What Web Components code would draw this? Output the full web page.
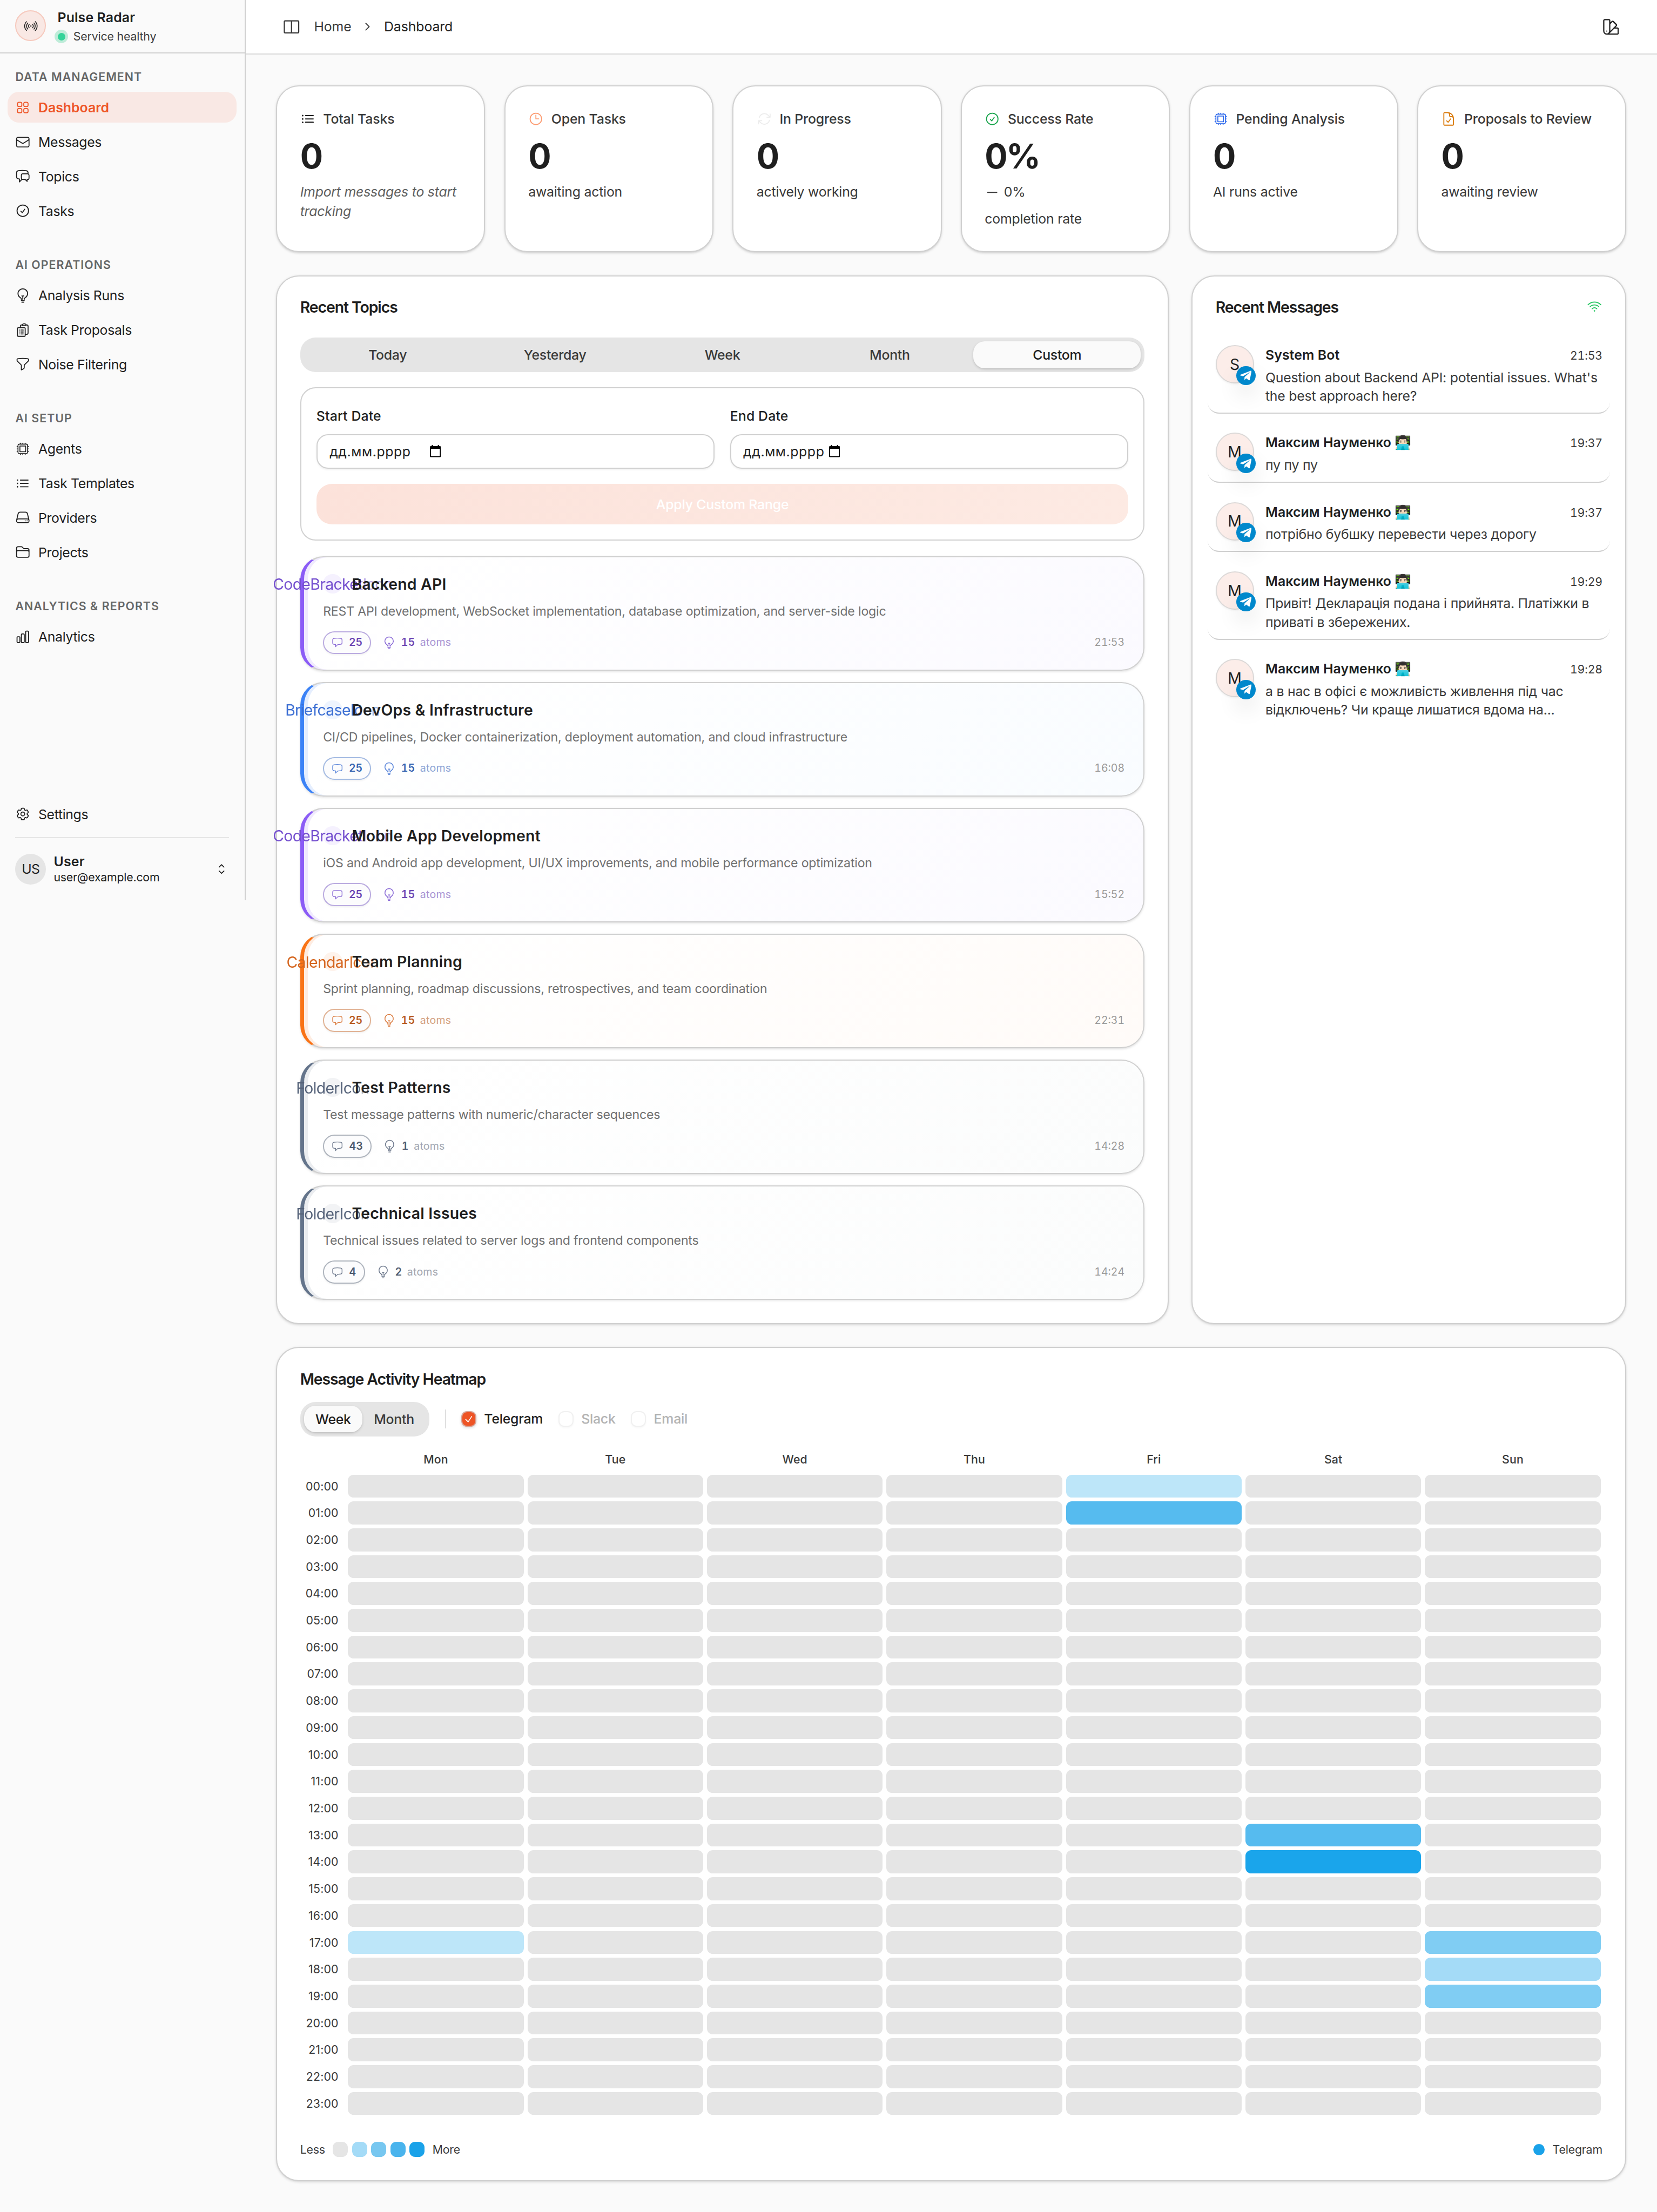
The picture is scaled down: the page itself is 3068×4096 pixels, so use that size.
<!DOCTYPE html>
<html lang="uk">
<head>
<meta charset="utf-8">
<title>Pulse Radar</title>
<style>
html { zoom: 1.775463; background: #fafafa; }
body {
  margin: 0; width: 1728px; height: 2307px; overflow: hidden;
  font-family: Inter, "Noto Sans", sans-serif; font-size: 14px; line-height: 20px; color: #1f1f1f;
  background: #fafafa;
  --b: 1.15px; --line: #d0d0d0; --muted: #3a3a3a; --fill: #e5e5e5;
  --shadow: 0 1px 3px rgba(0,0,0,.1), 0 1px 2px -1px rgba(0,0,0,.1);
}
</style>
</head>
<body>
<app-shell>
  <app-sidebar slot="side"></app-sidebar>
  <site-header slot="top"></site-header>
  <dashboard-view></dashboard-view>
</app-shell>
<script>
const ICONS = {
  grid: 'M3.75 6A2.25 2.25 0 0 1 6 3.75h2.25A2.25 2.25 0 0 1 10.5 6v2.25a2.25 2.25 0 0 1-2.25 2.25H6a2.25 2.25 0 0 1-2.25-2.25V6ZM3.75 15.75A2.25 2.25 0 0 1 6 13.5h2.25a2.25 2.25 0 0 1 2.25 2.25V18a2.25 2.25 0 0 1-2.25 2.25H6A2.25 2.25 0 0 1 3.75 18v-2.25ZM13.5 6a2.25 2.25 0 0 1 2.25-2.25H18A2.25 2.25 0 0 1 20.25 6v2.25A2.25 2.25 0 0 1 18 10.5h-2.25a2.25 2.25 0 0 1-2.25-2.25V6ZM13.5 15.75a2.25 2.25 0 0 1 2.25-2.25H18a2.25 2.25 0 0 1 2.25 2.25V18A2.25 2.25 0 0 1 18 20.25h-2.25A2.25 2.25 0 0 1 13.5 18v-2.25Z',
  mail: 'M21.75 6.75v10.5a2.25 2.25 0 0 1-2.25 2.25h-15a2.25 2.25 0 0 1-2.25-2.25V6.75m19.5 0A2.25 2.25 0 0 0 19.5 4.5h-15a2.25 2.25 0 0 0-2.25 2.25m19.5 0v.243a2.25 2.25 0 0 1-1.07 1.916l-7.5 4.615a2.25 2.25 0 0 1-2.36 0L3.32 8.91a2.25 2.25 0 0 1-1.07-1.916V6.75',
  chats: 'M20.25 8.511c.884.284 1.5 1.128 1.5 2.097v4.286c0 1.136-.847 2.1-1.98 2.193-.34.027-.68.052-1.02.072v3.091l-3-3c-1.354 0-2.694-.055-4.02-.163a2.115 2.115 0 0 1-.825-.242m9.345-8.334a2.126 2.126 0 0 0-.476-.095 48.64 48.64 0 0 0-8.048 0c-1.131.094-1.976 1.057-1.976 2.192v4.286c0 .837.46 1.58 1.155 1.951m9.345-8.334V6.637c0-1.621-1.152-3.026-2.76-3.235A48.455 48.455 0 0 0 11.25 3c-2.115 0-4.198.137-6.24.402-1.608.209-2.76 1.614-2.76 3.235v6.226c0 1.621 1.152 3.026 2.76 3.235.577.075 1.157.14 1.74.194V21l4.155-4.155',
  check: 'M9 12.75 11.25 15 15 9.75M21 12a9 9 0 1 1-18 0 9 9 0 0 1 18 0Z',
  bulb: 'M12 18v-5.25m0 0a6.01 6.01 0 0 0 1.5-.189m-1.5.189a6.01 6.01 0 0 1-1.5-.189m3.75 7.478a12.06 12.06 0 0 1-4.5 0m3.75 2.383a14.406 14.406 0 0 1-3 0M14.25 18v-.192c0-.983.658-1.823 1.508-2.316a7.5 7.5 0 1 0-7.517 0c.85.493 1.509 1.333 1.509 2.316V18',
  clip: 'M9 12h3.75M9 15h3.75M9 18h3.75m3 .75H18a2.25 2.25 0 0 0 2.25-2.25V6.108c0-1.135-.845-2.098-1.976-2.192a48.424 48.424 0 0 0-1.123-.08m-5.801 0c-.065.21-.1.433-.1.664 0 .414.336.75.75.75h4.5a.75.75 0 0 0 .75-.75 2.25 2.25 0 0 0-.1-.664m-5.8 0A2.251 2.251 0 0 1 13.5 2.25H15c1.012 0 1.867.668 2.15 1.586m-5.8 0c-.376.023-.75.05-1.124.08C9.095 4.01 8.25 4.973 8.25 6.108V8.25m0 0H4.875c-.621 0-1.125.504-1.125 1.125v11.25c0 .621.504 1.125 1.125 1.125h9.75c.621 0 1.125-.504 1.125-1.125V9.375c0-.621-.504-1.125-1.125-1.125H8.25ZM6.75 12h.008v.008H6.75V12Zm0 3h.008v.008H6.75V15Zm0 3h.008v.008H6.75V18Z',
  funnel: 'M12 3c2.755 0 5.455.232 8.083.678.533.09.917.556.917 1.096v1.044a2.25 2.25 0 0 1-.659 1.591l-5.432 5.432a2.25 2.25 0 0 0-.659 1.591v2.927a2.25 2.25 0 0 1-1.244 2.013L9.75 21v-6.568a2.25 2.25 0 0 0-.659-1.591L3.659 7.409A2.25 2.25 0 0 1 3 5.818V4.774c0-.54.384-1.006.917-1.096A48.32 48.32 0 0 1 12 3Z',
  cpu: 'M8.25 3v1.5M4.5 8.25H3m18 0h-1.5M4.5 12H3m18 0h-1.5m-15 3.75H3m18 0h-1.5M8.25 19.5V21M12 3v1.5m0 15V21m3.75-18v1.5m0 15V21m-9-1.5h10.5a2.25 2.25 0 0 0 2.25-2.25V6.75a2.25 2.25 0 0 0-2.25-2.25H6.75A2.25 2.25 0 0 0 4.5 6.75v10.5a2.25 2.25 0 0 0 2.25 2.25Zm.75-12h9v9h-9v-9Z',
  list: 'M8.25 6.75h12M8.25 12h12m-12 5.25h12M3.75 6.75h.007v.008H3.75V6.75Zm.375 0a.375.375 0 1 1-.75 0 .375.375 0 0 1 .75 0ZM3.75 12h.007v.008H3.75V12Zm.375 0a.375.375 0 1 1-.75 0 .375.375 0 0 1 .75 0Zm-.375 5.25h.007v.008H3.75v-.008Zm.375 0a.375.375 0 1 1-.75 0 .375.375 0 0 1 .75 0Z',
  server: 'M21.75 17.25v-.228a4.5 4.5 0 0 0-.12-1.03l-2.268-9.64a3.375 3.375 0 0 0-3.285-2.602H7.923a3.375 3.375 0 0 0-3.285 2.602l-2.268 9.64a4.5 4.5 0 0 0-.12 1.03v.228m19.5 0a3 3 0 0 1-3 3H5.25a3 3 0 0 1-3-3m19.5 0a3 3 0 0 0-3-3H5.25a3 3 0 0 0-3 3m16.5 0h.008v.008h-.008v-.008Zm-3 0h.008v.008h-.008v-.008Z',
  folder: 'M2.25 12.75V12A2.25 2.25 0 0 1 4.5 9.75h15A2.25 2.25 0 0 1 21.75 12v.75m-8.69-6.44-2.12-2.12a1.5 1.5 0 0 0-1.061-.44H4.5A2.25 2.25 0 0 0 2.25 6v12a2.25 2.25 0 0 0 2.25 2.25h15A2.25 2.25 0 0 0 21.75 18V9a2.25 2.25 0 0 0-2.25-2.25h-5.379a1.5 1.5 0 0 1-1.06-.44Z',
  bars: 'M3 13.125C3 12.504 3.504 12 4.125 12h2.25c.621 0 1.125.504 1.125 1.125v6.75C7.5 20.496 6.996 21 6.375 21h-2.25A1.125 1.125 0 0 1 3 19.875v-6.75ZM9.75 8.625c0-.621.504-1.125 1.125-1.125h2.25c.621 0 1.125.504 1.125 1.125v11.25c0 .621-.504 1.125-1.125 1.125h-2.25a1.125 1.125 0 0 1-1.125-1.125V8.625ZM16.5 4.125c0-.621.504-1.125 1.125-1.125h2.25C20.496 3 21 3.504 21 4.125v15.75c0 .621-.504 1.125-1.125 1.125h-2.25a1.125 1.125 0 0 1-1.125-1.125V4.125Z',
  cog: 'M9.594 3.94c.09-.542.56-.94 1.11-.94h2.593c.55 0 1.02.398 1.11.94l.213 1.281c.063.374.313.686.645.87.074.04.147.083.22.127.325.196.72.257 1.075.124l1.217-.456a1.125 1.125 0 0 1 1.37.49l1.296 2.247a1.125 1.125 0 0 1-.26 1.431l-1.003.827c-.293.241-.438.613-.43.992a7.723 7.723 0 0 1 0 .255c-.008.378.137.75.43.991l1.004.827c.424.35.534.955.26 1.43l-1.298 2.247a1.125 1.125 0 0 1-1.369.491l-1.217-.456c-.355-.133-.75-.072-1.076.124a6.47 6.47 0 0 1-.22.128c-.331.183-.581.495-.644.869l-.213 1.281c-.09.543-.56.94-1.11.94h-2.594c-.55 0-1.019-.398-1.11-.94l-.213-1.281c-.062-.374-.312-.686-.644-.87a6.52 6.52 0 0 1-.22-.127c-.325-.196-.72-.257-1.076-.124l-1.217.456a1.125 1.125 0 0 1-1.369-.49l-1.297-2.247a1.125 1.125 0 0 1 .26-1.431l1.004-.827c.292-.24.437-.613.43-.991a6.932 6.932 0 0 1 0-.255c.007-.38-.138-.751-.43-.992l-1.004-.827a1.125 1.125 0 0 1-.26-1.43l1.297-2.247a1.125 1.125 0 0 1 1.37-.491l1.216.456c.356.133.751.072 1.076-.124.072-.044.146-.086.22-.128.332-.183.582-.495.644-.869l.214-1.28ZM15 12a3 3 0 1 1-6 0 3 3 0 0 1 6 0Z',
  signal: 'M9.348 14.652a3.75 3.75 0 0 1 0-5.304m5.304 0a3.75 3.75 0 0 1 0 5.304m-7.425 2.121a6.75 6.75 0 0 1 0-9.546m9.546 0a6.75 6.75 0 0 1 0 9.546M5.106 18.894c-3.808-3.807-3.808-9.98 0-13.788m13.788 0c3.808 3.807 3.808 9.98 0 13.788M12 12h.008v.008H12V12Zm.375 0a.375.375 0 1 1-.75 0 .375.375 0 0 1 .75 0Z',
  clock: 'M12 6v6h4.5m4.5 0a9 9 0 1 1-18 0 9 9 0 0 1 18 0Z',
  cycle: 'M16.023 9.348h4.992v-.001M2.985 19.644v-4.992m0 0h4.992m-4.993 0 3.181 3.183a8.25 8.25 0 0 0 13.803-3.7M4.031 9.865a8.25 8.25 0 0 1 13.803-3.7l3.181 3.182m0-4.991v4.99',
  doc: 'M10.125 2.25h-4.5c-.621 0-1.125.504-1.125 1.125v17.25c0 .621.504 1.125 1.125 1.125h12.75c.621 0 1.125-.504 1.125-1.125v-9M10.125 2.25h.375a9 9 0 0 1 9 9v.375M10.125 2.25A3.375 3.375 0 0 1 13.5 5.625v1.5c0 .621.504 1.125 1.125 1.125h1.5a3.375 3.375 0 0 1 3.375 3.375M9 15l2.25 2.25L15 12',
  wifi: 'M8.288 15.038a5.25 5.25 0 0 1 7.424 0M5.106 11.856c3.807-3.808 9.98-3.808 13.788 0M1.924 8.674c5.565-5.565 14.587-5.565 20.152 0M12.53 18.22l-.53.53-.53-.53a.75.75 0 0 1 1.06 0Z',
  minus: 'M5 12h14',
  updown: 'M8.25 15 12 18.75 15.75 15m-7.5-6L12 5.25 15.75 9',
  right: 'm9 18 6-6-6-6',
  panel: 'M4.1 4.5h15.8c.6 0 1.1.5 1.1 1.1v12.8c0 .6-.5 1.1-1.1 1.1H4.1c-.6 0-1.1-.5-1.1-1.1V5.6c0-.6.5-1.1 1.1-1.1ZM12 4.5v15',
  swatch: 'M4.098 19.902a3.75 3.75 0 0 0 5.304 0l6.401-6.402M6.75 21A3.75 3.75 0 0 1 3 17.25V4.125C3 3.504 3.504 3 4.125 3h5.25c.621 0 1.125.504 1.125 1.125v4.072M6.75 21a3.75 3.75 0 0 0 3.75-3.75V8.197M6.75 21h13.125c.621 0 1.125-.504 1.125-1.125v-5.25c0-.621-.504-1.125-1.125-1.125h-4.072M10.5 8.197l2.88-2.88c.438-.439 1.15-.439 1.59 0l3.712 3.713c.44.44.44 1.152 0 1.59l-2.879 2.88M6.75 17.25h.008v.008H6.75v-.008Z',
  bubble: 'M2.25 12.76c0 1.6 1.123 2.994 2.707 3.227 1.087.16 2.185.283 3.293.369V21l4.076-4.076a1.526 1.526 0 0 1 1.037-.443 48.282 48.282 0 0 0 5.68-.494c1.584-.233 2.707-1.626 2.707-3.228V6.741c0-1.602-1.123-2.995-2.707-3.228A48.394 48.394 0 0 0 12 3c-2.392 0-4.744.175-7.043.513C3.373 3.746 2.25 5.14 2.25 6.741v6.018Z',
  tick: 'm4.5 12.75 6 6 9-13.5'
};

/* Registers an element whose shadow markup is built from its attributes. */
const define = (tag, css, html) => customElements.define(tag, class extends HTMLElement {
  connectedCallback() {
    if (this.shadowRoot) return;
    const root = this.attachShadow({ mode: 'open' });
    const t = document.createElement('template');
    t.innerHTML = `<style>*{box-sizing:border-box}:host{display:block;box-sizing:border-box}${css}</style>` + html(n => this.getAttribute(n) ?? '', this);
    root.append(t.content.cloneNode(true));
  }
});
const ic = (name, size = 16, w = 1.5) => `<hi-icon name="${name}" size="${size}" w="${w}"></hi-icon>`;

define('hi-icon', ':host{display:inline-flex;flex:none}svg{display:block;fill:none;stroke:currentColor;stroke-linecap:round;stroke-linejoin:round}',
  a => `<svg width="${a('size')}" height="${a('size')}" viewBox="0 0 24 24" stroke-width="${a('w')}"><path d="${ICONS[a('name')]}"/></svg>`);

define('app-shell', `:host{display:flex;align-items:flex-start}.main{flex:1;min-width:0;display:flex;flex-direction:column}`,
  () => `<slot name="side"></slot><div class="main"><slot name="top"></slot><slot></slot></div>`);

define('nav-item', `:host{height:32px;border-radius:12px;display:flex;align-items:center;gap:8px;padding:0 8px;color:#1f1f1f;letter-spacing:-.0145em}
span{padding-top:1.2px}
:host([active]){background:#f9e8e4;color:#ee5425;font-weight:600;letter-spacing:0}`,
  a => `${ic(a('icon'), 16, a('icon') === 'cpu' ? 1.35 : 1.5)}<span><slot></slot></span>`);

define('nav-group', `:host{display:flex;flex-direction:column}
.t{height:32px;display:flex;align-items:center;padding:1.2px 8px 0;font-size:12px;font-weight:600;letter-spacing:.05em;color:#666}
.i{display:flex;flex-direction:column;gap:4px}`,
  a => `<div class="t">${a('label').replace('&', '&amp;')}</div><div class="i"><slot></slot></div>`);

define('app-sidebar', `:host{width:256px;height:939px;flex:none;display:flex;flex-direction:column;border-right:var(--b) solid #d0d0d0;background:#fafafa}
.brand{height:56px;border-bottom:var(--b) solid #d0d0d0;display:flex;align-items:center;padding:0 16px;gap:9px}
.logo{width:32px;height:32px;border-radius:50%;background:#f9e8e4;border:var(--b) solid #f6c9bd;display:flex;align-items:center;justify-content:center;margin-top:-1px}
.bt{display:flex;flex-direction:column;margin-top:1.6px}
.n{font-weight:600;padding-left:3px;letter-spacing:.005em;line-height:20px}
.s{display:flex;align-items:center;gap:5.5px;font-size:12px;line-height:20px;color:#404040;letter-spacing:-.008em}
.dot{width:14px;height:14px;border-radius:50%;background:#bfecd9;display:flex;align-items:center;justify-content:center}
.dot i{width:8px;height:8px;border-radius:50%;background:#34d399}
nav{flex:1;display:flex;flex-direction:column;gap:24px;padding:8px 8px 0}
footer{padding:0 8px 16px;display:flex;flex-direction:column}
hr{margin:8px 8px 0;border:0;height:1px;background:#e5e5e5}
.u{display:flex;align-items:center;gap:8px;padding:16px 8px 0}
.av{width:32px;height:32px;border-radius:50%;background:#e5e5e5;display:flex;align-items:center;justify-content:center;letter-spacing:-.03em}
.ut{flex:1;display:flex;flex-direction:column;line-height:17px}.ut b{font-weight:600;letter-spacing:.01em}
.ut span{font-size:12px;line-height:16px;letter-spacing:-.01em}`,
  () => `<div class="brand"><div class="logo">${ic('signal', 16, 1.35)}</div><div class="bt"><span class="n">Pulse Radar</span><span class="s"><span class="dot"><i></i></span>Service healthy</span></div></div>
<nav>
<nav-group label="DATA MANAGEMENT"><nav-item icon="grid" active>Dashboard</nav-item><nav-item icon="mail">Messages</nav-item><nav-item icon="chats">Topics</nav-item><nav-item icon="check">Tasks</nav-item></nav-group>
<nav-group label="AI OPERATIONS"><nav-item icon="bulb">Analysis Runs</nav-item><nav-item icon="clip">Task Proposals</nav-item><nav-item icon="funnel">Noise Filtering</nav-item></nav-group>
<nav-group label="AI SETUP"><nav-item icon="cpu">Agents</nav-item><nav-item icon="list">Task Templates</nav-item><nav-item icon="server">Providers</nav-item><nav-item icon="folder">Projects</nav-item></nav-group>
<nav-group label="ANALYTICS &amp; REPORTS"><nav-item icon="bars">Analytics</nav-item></nav-group>
</nav>
<footer><nav-item icon="cog">Settings</nav-item><hr>
<div class="u"><div class="av">US</div><div class="ut"><b>User</b><span>user@example.com</span></div>${ic('updown')}</div></footer>`);

define('site-header', `:host{height:57px;background:#fff;border-bottom:var(--b) solid #d9d9d9;display:flex;align-items:center;justify-content:space-between;padding:0 38px}
.c{display:flex;align-items:center;gap:10px;color:#1f1f1f;letter-spacing:-.004em}
.c span:first-of-type{color:#3a3a3a;margin-left:3.5px}hi-icon{color:#3a3a3a}.r{color:#1f1f1f}`,
  () => `<div class="c">${ic('panel', 20)}<span>Home</span>${ic('right', 14, 1.8)}<span>Dashboard</span></div><hi-icon class="r" name="swatch" size="20" w="1.5"></hi-icon>`);

define('ui-card', `:host{background:#fff;border:var(--b) solid var(--line);border-radius:24px;padding:calc(25px - var(--b));box-shadow:var(--shadow);display:flex;flex-direction:column;min-width:0}`,
  () => `<slot></slot>`);

define('stat-card', `ui-card{height:174px}
.t{display:flex;align-items:center;gap:8px;font-weight:500;color:#3a3a3a;letter-spacing:-.007em;height:20px;white-space:nowrap;padding-top:.6px}
.v{font-size:35.4px;line-height:40px;height:40px;font-weight:700;margin:9px 0 7px;letter-spacing:-.045em}
.s{color:#3a3a3a;letter-spacing:-.009em;padding-top:.5px}.s+.s{margin-top:7.5px}
.s.d{display:flex;align-items:center;gap:4px}
:host([hint]) .s{font-style:italic;color:#606060;letter-spacing:-.009em}`,
  a => `<ui-card><div class="t"><hi-icon style="color:${a('tone')}" name="${a('icon')}" size="16" w="${{ list: 1.8, cpu: 1.35 }[a('icon')] || 1.5}"></hi-icon>${a('label')}</div>
<div class="v">${a('value')}</div>${a('delta') ? `<div class="s d">${ic('minus', 16, 1.8)}${a('delta')}</div>` : ''}<div class="s"><slot></slot></div></ui-card>`);

define('seg-tabs', `:host{display:flex;height:36px;padding:4px;background:var(--fill);border-radius:16px;font-weight:500;letter-spacing:-.012em;color:#3a3a3a}
span{display:flex;align-items:center;justify-content:center;border-radius:12px;padding:.8px 12px 0}
:host([fill]) span{flex:1 1 0}
.on{background:#fafafa;color:#1f1f1f;box-shadow:0 1px 3px rgba(0,0,0,.14),0 1px 2px -1px rgba(0,0,0,.12)}`,
  a => a('items').split(',').map(t => `<span class="${t === a('on') ? 'on' : ''}">${t}</span>`).join(''));

define('date-field', `:host{flex:1 1 0}
label{display:block;height:24px;line-height:26px;font-weight:500;letter-spacing:.005em}
.f{margin-top:8px;height:36px;border:var(--b) solid var(--line);border-radius:12px;background:#fff;box-shadow:0 1px 2px rgba(0,0,0,.06);display:flex;align-items:center;padding:0 12.6px;letter-spacing:.023em}
.f span{width:var(--w);padding-top:.6px}svg{display:block;margin-top:-1px}`,
  a => `<label>${a('label')}</label><div class="f" style="--w:${a('gap')}px"><span>дд.мм.рррр</span><svg width="11.4" height="12.8" viewBox="0 0 18 20"><path fill="#000" fill-rule="evenodd" d="M3 0h2v1.6h8V0h2v1.6h1.4c.9 0 1.600.700 1.600 1.600v15.200c0 .900-.700 1.600-1.600 1.600H1.600C.7 20 0 19.300 0 18.400V3.200C0 2.300.7 1.600 1.600 1.600H3ZM1.700 6.200v12.100h14.600V6.200Z"/></svg></div>`);

define('date-range', `:host{margin-top:16px;height:160px;border:var(--b) solid var(--line);border-radius:16px;padding:calc(17px - var(--b));display:flex;flex-direction:column;gap:16px}
.r{display:flex;gap:16px}
.b{height:42px;border-radius:16px;background:linear-gradient(100deg,#fce2da,#fdeae3);color:#fff;display:flex;align-items:center;justify-content:center;font-weight:500;letter-spacing:-.008em;padding-top:.8px}`,
  () => `<div class="r"><date-field label="Start Date" gap="104.7"></date-field><date-field label="End Date" gap="89.4"></date-field></div><div class="b">Apply Custom Range</div>`);

const TONES = {
  violet: { edge: '#8b5cf6', soft: '#f0eafe', glow: '#f5f1fe', ink: '#7550cf', num: '#6b46b3', dim: '#a794d4', rim: '#baabe0', tint: '#fbfaff' },
  blue: { edge: '#3b82f6', soft: '#e5eefe', glow: '#eef4fe', ink: '#3c6fd3', num: '#3262b0', dim: '#8ba5d6', rim: '#a3bae2', tint: '#f9fcff' },
  orange: { edge: '#f97316', soft: '#feece1', glow: '#fef3ec', ink: '#d5661f', num: '#b75a1f', dim: '#d3a080', rim: '#e1b395', tint: '#fffbf8' },
  slate: { edge: '#64748b', soft: '#ebedf0', glow: '#f2f3f5', ink: '#56637a', num: '#4d5a6e', dim: '#a1a6b0', rim: '#aeb4bd', tint: '#fbfcfc' }
};
define('topic-card', `:host{height:119.33px;border:var(--b) solid var(--line);border-left:4px solid var(--edge);border-radius:24px;
box-shadow:0 1px 3px rgba(0,0,0,.07),0 1px 2px -1px rgba(0,0,0,.07),inset 4px 0 0 var(--soft);background:linear-gradient(135deg,#fff 10%,var(--tint));padding:calc(17px - var(--b)) calc(21px - var(--b)) 0 20px;display:flex;flex-direction:column}
.h{display:flex;align-items:center;gap:10px;height:24px}
.g{width:20px;height:20px;flex:none;border-radius:50%;background:var(--glow);display:flex;align-items:center;justify-content:center;color:var(--ink);font-size:16px;letter-spacing:-.024em}
.g span{flex:none;padding-top:.9px;-webkit-mask:linear-gradient(90deg,#000 calc(50% + 30px),rgba(0,0,0,.5) calc(50% + 30px));mask:linear-gradient(90deg,#000 calc(50% + 30px),rgba(0,0,0,.5) calc(50% + 30px))}
h3{position:relative;margin:0;padding-top:.9px;font-size:16px;font-weight:600;line-height:24px;letter-spacing:.007em}
p{margin:8px 0 12px;font-size:13px;line-height:17.33px;letter-spacing:-.0075em;color:#707070;white-space:nowrap}
.m{display:flex;align-items:center;height:24px;gap:12px;font-size:11px;color:var(--dim)}
.b{display:flex;align-items:center;gap:6px;height:24px;padding:0 8px;border:var(--b) solid var(--rim);border-radius:12px;background:#fcfcfd;box-shadow:0 1px 2px rgba(0,0,0,.06)}
.a{display:flex;align-items:center;gap:5.5px;letter-spacing:.012em}hi-icon{color:var(--ink);opacity:.85}
b{font-weight:600;color:var(--num);letter-spacing:0}.a b{font-variant-numeric:tabular-nums}
time{margin-left:auto;color:#999;font-variant-numeric:tabular-nums;letter-spacing:0}`,
  (a, el) => {
    const t = TONES[a('tone')];
    for (const k in t) el.style.setProperty('--' + k, t[k]);
    return `<div class="h"><div class="g"><span>${a('icon')}</span></div><h3>${a('name').replace('&', '&amp;')}</h3></div><p><slot></slot></p>
<div class="m"><div class="b">${ic('bubble', 12)}<b>${a('count')}</b></div><div class="a">${ic('bulb', 14)}<b>${a('atoms')}</b>atoms</div><time>${a('time')}</time></div>`;
  });

define('message-row', `:host{display:flex;gap:12px;padding:8px;margin:0 -8px;border-radius:12px;border-bottom:var(--b) solid var(--line);padding-bottom:calc(9px - var(--b))}
:host([last]){border-bottom-color:transparent}
.v{position:relative;width:40px;height:40px;flex:none;border-radius:50%;border:var(--b) solid #dcd9d8;background:#fcede9;display:flex;align-items:center;justify-content:center;font-size:16px;box-shadow:0 1px 2px rgba(0,0,0,.05)}
.tg{position:absolute;right:-3px;bottom:-3px;width:20px;height:20px;border-radius:50%;background:#0088cc;display:flex;align-items:center;justify-content:center;box-shadow:0 10px 22px rgba(0,0,0,.1)}
.tg svg{display:block;margin-right:1px}
.c{flex:1;min-width:0}.h{display:flex;justify-content:space-between;height:20px;margin-bottom:4px;padding-top:.5px}
b{font-weight:600;letter-spacing:.003em}time{font-size:12px;font-variant-numeric:tabular-nums;color:#3a3a3a;line-height:21px;letter-spacing:-.01em}
p{margin:0;line-height:19.25px;letter-spacing:-.0096em;color:#3a3a3a;white-space:pre-line}`,
  a => `<div class="v">${a('who')[0] === 'S' ? 'S' : 'М'}<div class="tg"><svg width="12" height="10.7" viewBox="0 56 448 400"><path fill="#fff" d="M446.700 98.600l-67.600 318.800c-5.100 22.500-18.400 28.100-37.300 17.500l-103-75.900-49.700 47.800c-5.500 5.500-10.100 10.100-20.700 10.100l7.400-104.900 190.900-172.500c8.300-7.400-1.800-11.500-12.900-4.100L117.800 284 16.200 252.200c-22.100-6.900-22.500-22.100 4.600-32.700L418.200 66.400c18.400-6.900 34.500 4.100 28.500 32.200z"/></svg></div></div>
<div class="c"><div class="h"><b>${a('who')}</b><time>${a('time')}</time></div><p><slot></slot></p></div>`);

define('check-box', `:host{display:flex;align-items:center;gap:8px;font-weight:500;letter-spacing:-.01em}
.k{width:16px;height:16px;border-radius:6px;border:var(--b) solid #c9c9c9;background:#fff;display:flex;align-items:center;justify-content:center;box-shadow:0 1px 3px rgba(0,0,0,.14);color:#fff}
:host([on]) .k{background:#ee5425;border-color:#d8a497}
:host([off]){color:#b3b3b3}:host([off]) .k{border-color:#f0f0f0;box-shadow:0 1px 2px rgba(0,0,0,.04)}`,
  (a, el) => `<span class="k">${el.hasAttribute('on') ? ic('tick', 10, 2.2) : ''}</span><slot></slot>`);

const HEAT = { '0-4': '#bde6f9', '1-4': '#56bbef', '13-5': '#56bbef', '14-5': '#1aa5eb', '17-0': '#bde6f9', '17-6': '#80cdf3', '18-6': '#a4dbf7', '19-6': '#80cdf3' };
define('heat-map', `:host{font-size:12px;color:#3a3a3a;padding-right:1.8px}
.g{display:grid;grid-template-columns:46px repeat(7,1fr);column-gap:4px;row-gap:4px}
.d{height:20px;line-height:16.8px;text-align:center;font-weight:500;letter-spacing:.008em}
.l{height:24px;line-height:24.6px;text-align:right;padding-right:6px;letter-spacing:.008em}
.c{height:24px;border-radius:6px;background:var(--fill)}`,
  () => {
    let s = '<div class="g"><i></i>' + ['Mon', 'Tue', 'Wed', 'Thu', 'Fri', 'Sat', 'Sun'].map(d => `<div class="d">${d}</div>`).join('');
    for (let h = 0; h < 24; h++) {
      s += `<div class="l">${String(h).padStart(2, '0')}:00</div>`;
      for (let d = 0; d < 7; d++) s += `<div class="c"${HEAT[h + '-' + d] ? ` style="background:${HEAT[h + '-' + d]}"` : ''}></div>`;
    }
    return s + '</div>';
  });

define('dashboard-view', `:host{padding:32px;display:flex;flex-direction:column;gap:24px}
.stats{display:grid;grid-template-columns:repeat(6,1fr);gap:20px}
.row{display:grid;grid-template-columns:930.67px 1fr;gap:24px;height:1094px}
h2{margin:0 0 -.7px;padding-top:.7px;font-size:16px;line-height:16px;font-weight:600;letter-spacing:-.0375em}
.topics{display:flex;flex-direction:column;gap:12px;margin-top:16px}
seg-tabs[fill]{margin-top:24px}
.mh{display:flex;justify-content:space-between;align-items:center;height:16px;color:#1f1f1f}
.mh hi-icon{color:#22c55e}
.msgs{display:flex;flex-direction:column;gap:12px;margin-top:24px}
.heat{height:870px}
.ctl{display:flex;align-items:center;gap:16px;margin-top:16px;height:36px}
.sep{width:1px;height:20px;background:#d0d0d0}
heat-map{margin-top:16px}
.lg{display:flex;align-items:center;justify-content:space-between;margin-top:28px;height:16px;font-size:12px;color:#3a3a3a;letter-spacing:-.009em}
.lg div{display:flex;align-items:center;gap:8px}.lg .sw{gap:4px}.lg span:not(.pt){padding-top:.8px}
.sw i{width:16px;height:16px;border-radius:6px}.pt{width:12px;height:12px;border-radius:50%;background:#1aa2e9}`,
  () => `<div class="stats">
<stat-card icon="list" tone="#1f1f1f" label="Total Tasks" value="0" hint>Import messages to start tracking</stat-card>
<stat-card icon="clock" tone="#fc9c72" label="Open Tasks" value="0">awaiting action</stat-card>
<stat-card icon="cycle" tone="#ececec" label="In Progress" value="0">actively working</stat-card>
<stat-card icon="check" tone="#16a34a" label="Success Rate" value="0%" delta="0%">completion rate</stat-card>
<stat-card icon="cpu" tone="#2563eb" label="Pending Analysis" value="0">AI runs active</stat-card>
<stat-card icon="doc" tone="#d97706" label="Proposals to Review" value="0">awaiting review</stat-card>
</div>
<div class="row">
<ui-card><h2>Recent Topics</h2><seg-tabs fill items="Today,Yesterday,Week,Month,Custom" on="Custom"></seg-tabs><date-range></date-range>
<div class="topics">
<topic-card tone="violet" icon="CodeBracketIcon" name="Backend API" count="25" atoms="15" time="21:53">REST API development, WebSocket implementation, database optimization, and server-side logic</topic-card>
<topic-card tone="blue" icon="BriefcaseIcon" name="DevOps & Infrastructure" count="25" atoms="15" time="16:08">CI/CD pipelines, Docker containerization, deployment automation, and cloud infrastructure</topic-card>
<topic-card tone="violet" icon="CodeBracketIcon" name="Mobile App Development" count="25" atoms="15" time="15:52">iOS and Android app development, UI/UX improvements, and mobile performance optimization</topic-card>
<topic-card tone="orange" icon="CalendarIcon" name="Team Planning" count="25" atoms="15" time="22:31">Sprint planning, roadmap discussions, retrospectives, and team coordination</topic-card>
<topic-card tone="slate" icon="FolderIcon" name="Test Patterns" count="43" atoms="1" time="14:28">Test message patterns with numeric/character sequences</topic-card>
<topic-card tone="slate" icon="FolderIcon" name="Technical Issues" count="4" atoms="2" time="14:24">Technical issues related to server logs and frontend components</topic-card>
</div></ui-card>
<ui-card><div class="mh"><h2>Recent Messages</h2>${ic('wifi')}</div>
<div class="msgs">
<message-row who="System Bot" time="21:53">Question about Backend API: potential issues. What's
the best approach here?</message-row>
<message-row who="Максим Науменко 👨🏻‍💻" time="19:37">пу пу пу</message-row>
<message-row who="Максим Науменко 👨🏻‍💻" time="19:37">потрібно бубшку перевести через дорогу</message-row>
<message-row who="Максим Науменко 👨🏻‍💻" time="19:29">Привіт! Декларація подана і прийнята. Платіжки в
приваті в збережених.</message-row>
<message-row who="Максим Науменко 👨🏻‍💻" time="19:28" last>а в нас в офісі є можливість живлення під час
відключень? Чи краще лишатися вдома на...</message-row>
</div></ui-card>
</div>
<ui-card class="heat"><h2>Message Activity Heatmap</h2>
<div class="ctl"><seg-tabs items="Week,Month" on="Week"></seg-tabs><span class="sep"></span><check-box on>Telegram</check-box><check-box off>Slack</check-box><check-box off>Email</check-box></div>
<heat-map></heat-map>
<div class="lg"><div><span>Less</span><div class="sw"><i style="background:#e5e5e5"></i><i style="background:#a4dbf7"></i><i style="background:#77c7f0"></i><i style="background:#4ab4ed"></i><i style="background:#1aa2e9"></i></div><span>More</span></div><div><span class="pt"></span><span>Telegram</span></div></div>
</ui-card>`);
</script>
</body>
</html>
